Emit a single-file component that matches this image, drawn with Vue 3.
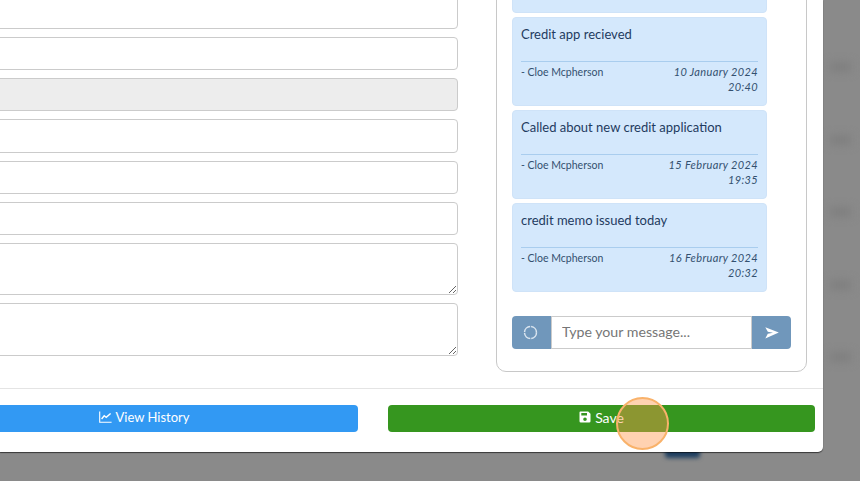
<script setup>
const fields = [
  { id: 1, cls: '' },
  { id: 2, cls: '' },
  { id: 3, cls: '', disabled: true },
  { id: 4, cls: 'tall' },
  { id: 5, cls: '' },
  { id: 6, cls: '' }
]
const messages = [
  { text: 'Credit app recieved', date: '10 January 2024', time: '20:40' },
  { text: 'Called about new credit application', date: '15 February 2024', time: '19:35' },
  { text: 'credit memo issued today', date: '16 February 2024', time: '20:32' }
]
</script>

<template>
  <div class="page">
    <div class="backdrop-list" aria-hidden="true">
      <span v-for="n in 5" :key="n" class="ghost"></span>
    </div>
    <span class="ghost-button" aria-hidden="true"></span>

    <main class="modal">
      <section class="modal-body">
        <form class="form-col">
          <input
            v-for="f in fields"
            :key="f.id"
            class="control"
            :class="f.cls"
            :disabled="f.disabled"
          />
          <textarea class="control area"></textarea>
          <textarea class="control area last"></textarea>
        </form>

        <aside class="chat">
          <div class="messages">
            <article class="bubble stub"></article>
            <article v-for="m in messages" :key="m.text" class="bubble">
              <p class="text">{{ m.text }}</p>
              <div class="meta">
                <span class="author">- Cloe Mcpherson</span>
                <span class="stamp">{{ m.date }}<br />{{ m.time }}</span>
              </div>
            </article>
          </div>
          <div class="send-row">
            <button type="button" class="addon left" aria-label="Refresh">
              <svg width="15" height="15" viewBox="0 0 15 15">
                <circle cx="7.5" cy="7.5" r="6" fill="none" stroke="#dbe6f0" stroke-width="1.5" stroke-dasharray="8.4 1" />
              </svg>
            </button>
            <input class="msg-input" placeholder="Type your message..." />
            <button type="button" class="addon right" aria-label="Send">
              <svg width="14" height="12" viewBox="0 0 14 12">
                <path d="M0.3 0.2 L13.8 5.6 L0.3 11.6 L2.8 6.8 L8 5.7 L2.8 4.8 Z" fill="#fff" />
              </svg>
            </button>
          </div>
        </aside>
      </section>

      <footer class="modal-footer">
        <button type="button" class="btn blue">
          <svg width="13" height="12" viewBox="0 0 13 12">
            <path d="M0.7 0.5 V11.2 H12.6" fill="none" stroke="#fff" stroke-width="1.1" />
            <path d="M2.6 8 L5.2 4.8 L7.2 6.3 L11.6 2.4" fill="none" stroke="#fff" stroke-width="1.4" />
          </svg>
          View History
        </button>
        <button type="button" class="btn green">
          <svg width="12" height="12" viewBox="0 0 12 12">
            <path fill-rule="evenodd" d="M1.4 0.5 H9.2 L11.5 2.8 V10.2 Q11.5 11.5 10.2 11.5 H1.8 Q0.5 11.5 0.5 10.2 V1.4 Q0.5 0.5 1.4 0.5 Z M2.3 2 V4.6 H8 V2 Z M6 6.4 A1.8 1.8 0 1 0 6 10 A1.8 1.8 0 1 0 6 6.4 Z" fill="#fff" />
          </svg>
          Save
        </button>
      </footer>
    </main>

    <span class="click-ring" aria-hidden="true"></span>
  </div>
</template>

<style>
html, body { margin: 0; overflow: hidden; }
</style>

<style scoped>
.page {
  position: relative;
  width: 860px;
  height: 481px;
  overflow: hidden;
  background: #8a8a8a;
  font-family: "Lato", "Open Sans", sans-serif;
  color: #1f3b5f;
}
.backdrop-list {
  position: absolute;
  left: 830px;
  top: 62px;
  display: flex;
  flex-direction: column;
  gap: 62.5px;
}
.ghost {
  width: 21px;
  height: 10px;
  background: #7f7f7f;
  filter: blur(4px);
}
.ghost-button {
  position: absolute;
  left: 665px;
  top: 444px;
  width: 35px;
  height: 14px;
  border-radius: 3px;
  background: #1f3f60;
  filter: blur(2px);
}
.modal {
  position: relative;
  box-sizing: border-box;
  width: 823px;
  height: 452px;
  background: #fff;
  border-bottom-right-radius: 5px;
  box-shadow: 0 1px 1px rgba(0, 0, 0, 0.6);
  display: flex;
  flex-direction: column;
}
.modal-body {
  height: 388px;
  display: flex;
  align-items: flex-end;
  gap: 38px;
}
.form-col {
  box-sizing: border-box;
  width: 458px;
  height: 388px;
  padding-bottom: 32px;
  display: flex;
  flex-direction: column;
  justify-content: flex-end;
  gap: 8px;
  flex: none;
}
.control {
  display: block;
  box-sizing: border-box;
  width: 470px;
  margin: 0 0 0 -12px;
  height: 33px;
  flex: none;
  border: 1px solid #cbcbcb;
  border-radius: 4px;
  background: #fff;
  outline: none;
}
.control.tall { height: 34px; }
.control:disabled { background: #ededed; }
.control.area { height: 52px; }
.control.area.last { height: 53px; }
.chat {
  box-sizing: border-box;
  width: 311px;
  height: 400px;
  margin-bottom: 16px;
  padding: 0 15px 22px;
  border: 1px solid #c8c8c8;
  border-radius: 10px;
  display: flex;
  flex-direction: column;
  justify-content: flex-end;
  flex: none;
}
.messages {
  width: 255px;
  display: flex;
  flex-direction: column;
  justify-content: flex-end;
  gap: 4px;
  margin-bottom: 24px;
}
.bubble {
  box-sizing: border-box;
  height: 89px;
  flex: none;
  padding: 8px 8px 0 8px;
  border: 1px solid #cfe3f8;
  border-radius: 4px;
  background: #d4e8fc;
}
.text {
  margin: 0;
  height: 35px;
  font-size: 13px;
  line-height: 17px;
  color: #1f3b5f;
}
.meta {
  display: flex;
  justify-content: space-between;
  padding-top: 2px;
  border-top: 1px solid #a9cdee;
  font-size: 10.5px;
  line-height: 15px;
  color: #33506f;
}
.author { padding-top: 1px; }
.stamp {
  text-align: right;
  font-size: 11px;
  font-style: italic;
  letter-spacing: 0.35px;
}
.send-row {
  display: flex;
  width: 279px;
  height: 33px;
  flex: none;
}
.addon {
  width: 39px;
  padding: 0;
  border: 0;
  background: #7097bb;
  display: flex;
  align-items: center;
  justify-content: center;
}
.addon.left { border-radius: 4px 0 0 4px; padding-right: 2px; padding-bottom: 1px; }
.addon.right { border-radius: 0 4px 4px 0; }
.msg-input {
  box-sizing: border-box;
  width: 201px;
  padding: 0 10px 3px;
  border: 1px solid #cbcbcb;
  font-family: inherit;
  font-size: 14.2px;
  color: #555;
  outline: none;
  min-width: 0;
}
.msg-input::placeholder { color: #767676; opacity: 1; }
.modal-footer {
  box-sizing: border-box;
  width: 892px;
  height: 64px;
  margin-left: -69px;
  padding: 16px 8px 0 0;
  border-top: 1px solid #e4e4e4;
  display: grid;
  grid-template-columns: 427px 427px;
  gap: 30px;
  align-content: start;
}
.btn {
  height: 27px;
  padding: 0 0 3px;
  border: 0;
  border-radius: 4px;
  color: #fff;
  font-family: inherit;
  font-size: 14px;
  display: flex;
  align-items: center;
  justify-content: center;
  gap: 4px;
}
.btn.blue { background: #3299f3; font-size: 13px; gap: 3px; }
.btn.green { background: #36961f; }
.click-ring {
  position: absolute;
  left: 616px;
  top: 397px;
  box-sizing: border-box;
  width: 53px;
  height: 53px;
  border: 2px solid #f9b26a;
  border-radius: 50%;
  background: rgba(255, 150, 75, 0.43);
}
</style>
